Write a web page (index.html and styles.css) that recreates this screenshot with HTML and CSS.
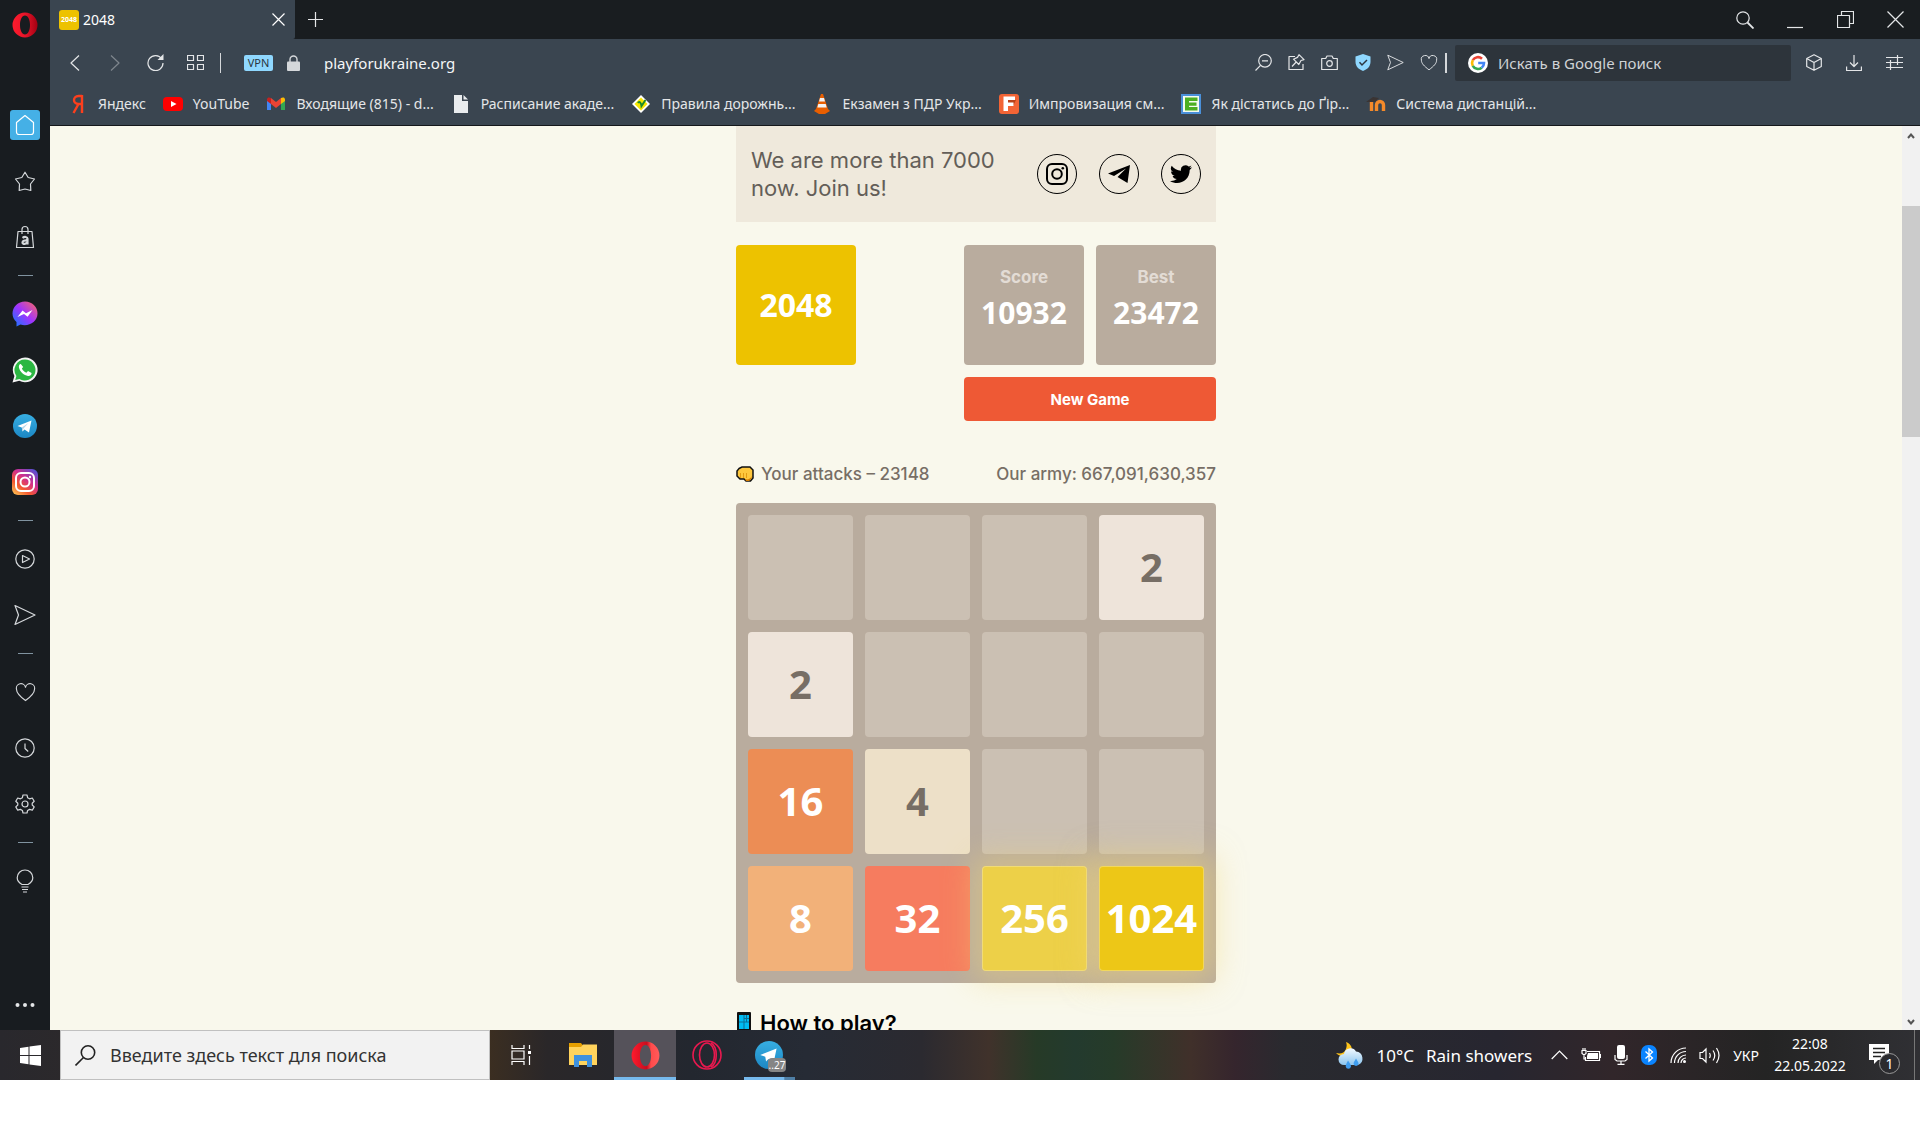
FILE: index.html
```html
<!DOCTYPE html>
<html lang="uk">
<head>
<meta charset="utf-8">
<title>2048</title>
<link rel="stylesheet" href="styles.css">
</head>
<body>
<svg class="defs" width="0" height="0" aria-hidden="true">
  <defs>
    <linearGradient id="g-opera" x1="0" x2="1"><stop offset="0" stop-color="#ff1b2d"/><stop offset="0.5" stop-color="#e8152a"/><stop offset="1" stop-color="#a30012"/></linearGradient>
    <linearGradient id="g-opera2" x1="0" x2="1"><stop offset="0" stop-color="#ff1b2d"/><stop offset="0.55" stop-color="#c80d1e"/><stop offset="0.7" stop-color="#ff4b4b"/><stop offset="1" stop-color="#ff5b5b"/></linearGradient>
    <linearGradient id="g-msg" x1="0" y1="1" x2="1" y2="0"><stop offset="0" stop-color="#0a7cff"/><stop offset="0.5" stop-color="#a033ff"/><stop offset="1" stop-color="#ff6a5c"/></linearGradient>
    <linearGradient id="g-ig" x1="0" y1="1" x2="0.8" y2="0"><stop offset="0" stop-color="#ffd35a"/><stop offset="0.35" stop-color="#f4582f"/><stop offset="0.65" stop-color="#d02e8f"/><stop offset="1" stop-color="#5b4fd0"/></linearGradient>
    <linearGradient id="g-tg" x1="0" y1="0" x2="0" y2="1"><stop offset="0" stop-color="#37aee2"/><stop offset="1" stop-color="#1c87c4"/></linearGradient>
    <linearGradient id="g-cloud" x1="0" y1="0" x2="0" y2="1"><stop offset="0" stop-color="#f2f9ff"/><stop offset="1" stop-color="#8cc5ef"/></linearGradient>
    <symbol id="i-send" viewBox="0 0 22 22"><path d="M1 1.500 21 11 1 20.500 4.500 11z"/></symbol>
    <symbol id="i-heart" viewBox="0 0 22 20"><path d="M11 18.500C5 14 1.500 10.500 1.500 6.500A4.800 4.800 0 0 1 11 4.500 4.800 4.800 0 0 1 20.500 6.500C20.500 10.500 17 14 11 18.500z"/></symbol>
  </defs>
</svg>
<div class="desktop">
  <div class="browser">
    <aside class="sidebar">
      <div class="brand"><svg width="26" height="26" viewBox="0 0 26 26"><path fill="url(#g-opera)" fill-rule="evenodd" d="M13 .5a12.500 12.500 0 1 0 0 25 12.500 12.500 0 0 0 0-25zM13 3.500c3 0 5 4.200 5 9.500s-2 9.500-5 9.500-5-4.200-5-9.500 2-9.500 5-9.500z"/></svg></div>
      <button class="side home" aria-label="Home"><svg class="ln" width="20" height="22" viewBox="0 0 20 22"><path d="M10 1.500 18.500 8.500V18a2.500 2.500 0 0 1-2.500 2.500H4A2.500 2.500 0 0 1 1.500 18V8.500z"/></svg></button>
      <button class="side" aria-label="Speed dial"><svg class="ln" width="22" height="21" viewBox="0 0 22 21"><path d="M11 1.200 14.200 6.500 20.500 8 16.500 13 16.800 19.500 11 18 5.200 19.500 5.500 13 1.500 8 7.800 6.500z"/></svg></button>
      <button class="side" aria-label="Shopping"><svg class="ln" width="20" height="24" viewBox="0 0 20 24"><path d="M3 6.500h14l1.500 16H1.500zM7 9V4.500a3 3 0 0 1 6 0V9"/><path d="M7.500 12.800c2-1.300 5-1.100 5 1V19.500M12.500 15.500c-3-.2-5 .3-5 1.900 0 2 4 2 5-.4" stroke-width="2.200"/></svg></button>
      <hr class="rule">
      <button class="side" aria-label="Messenger"><svg width="26" height="26" viewBox="0 0 26 26"><path fill="url(#g-msg)" d="M13 .5C6 .5.500 5.500.500 12.500c0 3.500 1.500 6.500 4 8.500V25.500L8.500 23.600c8 2.500 17-2.600 17-11C25.500 5.500 20 .5 13 .5z"/><path fill="#fff" d="M5.500 16 10.500 9.500 14 12.300 20.500 9 15.600 15.800 12 13z"/></svg></button>
      <button class="side" aria-label="WhatsApp"><svg width="26" height="26" viewBox="0 0 26 26"><path fill="#f4f4f4" d="M13 .5A12.400 12.400 0 0 0 2.400 19L.5 25.500 7.300 23.800A12.400 12.400 0 1 0 13 .5z"/><path fill="#2cb742" d="M13 2.500A10.500 10.500 0 0 0 4.400 19l-1.200 4 4.200-1.100A10.500 10.500 0 1 0 13 2.500z"/><path fill="#fff" d="M8.800 7c-1.500 0-2.300 2-1.800 3.800 1 4 5 7.700 9 8.200 2 .2 3.600-1 3.600-3l-3.600-1.900-1.600 1.700c-2-.8-3.600-2.300-4.500-4.300l1.300-1.500z"/></svg></button>
      <button class="side" aria-label="Telegram"><svg width="24" height="24" viewBox="0 0 24 24"><circle cx="12" cy="12" r="12" fill="url(#g-tg)"/><path fill="#fff" d="M4.500 12 18.500 6.500 16 18.500 11.500 15.500 9.500 17.500 8.800 13.500z"/><path fill="#b5d5e8" d="M8.800 13.500 15.500 9 10.500 14.500 9.500 17.500z"/></svg></button>
      <button class="side" aria-label="Instagram"><svg width="26" height="26" viewBox="0 0 26 26"><rect width="26" height="26" rx="6" fill="url(#g-ig)"/><rect x="4" y="4" width="18" height="18" rx="5" fill="none" stroke="#fff" stroke-width="2"/><circle cx="13" cy="13" r="4.500" fill="none" stroke="#fff" stroke-width="2"/><circle cx="18" cy="8" r="1.200" fill="#fff"/></svg></button>
      <hr class="rule">
      <button class="side" aria-label="Player"><svg class="ln" width="20" height="20" viewBox="0 0 20 20"><circle cx="10" cy="10" r="9.200"/><path d="M7.500 6.500 14.500 10 7.500 13.500z"/></svg></button>
      <button class="side" aria-label="My Flow"><svg class="ln" width="22" height="22"><use href="#i-send"/></svg></button>
      <hr class="rule">
      <button class="side" aria-label="Bookmarks"><svg class="ln" width="21" height="19"><use href="#i-heart"/></svg></button>
      <button class="side" aria-label="History"><svg class="ln" width="20" height="20" viewBox="0 0 20 20"><circle cx="10" cy="10" r="9.200"/><path d="M10 5.500v5l3.200 3"/></svg></button>
      <button class="side" aria-label="Settings"><svg class="ln" width="20" height="20" viewBox="0 0 20 20"><circle cx="10" cy="10" r="3"/><path d="M8 1h4l.6 2.700 2 1.100 2.700-.8 1.900 3.300-2 1.900v1.800l2 1.900-1.900 3.300-2.700-.8-2 1.100L12 19H8l-.6-2.500-2-1.100-2.700.8-1.900-3.300 2-1.900V9.200l-2-1.900 1.900-3.300 2.700.8 2-1.100z"/></svg></button>
      <hr class="rule">
      <button class="side" aria-label="Tips"><svg class="ln" width="18" height="24" viewBox="0 0 18 24"><path d="M6 15.500C3 13.800 1.200 11.800 1.200 8.800a7.800 7.800 0 0 1 15.600 0c0 3-1.800 5-4.800 6.700zM5.500 18h7M6 20.500h6M7 23h4"/></svg></button>
      <button class="side more" aria-label="More"><svg width="20" height="4" viewBox="0 0 20 4" fill="#e4e6e8"><circle cx="2.500" cy="2" r="2"/><circle cx="10" cy="2" r="2"/><circle cx="17.500" cy="2" r="2"/></svg></button>
    </aside>

    <div class="window">
      <header class="tabs">
        <div class="tab"><span class="favicon">2048</span><span class="tab-title">2048</span>
          <button class="ico tab-close" aria-label="Close tab"><svg class="ln" width="13" height="13" viewBox="0 0 13 13"><path d="M.5.5l12 12M12.500.5l-12 12"/></svg></button></div>
        <button class="ico plus" aria-label="New tab"><svg class="ln" width="15" height="15" viewBox="0 0 15 15"><path d="M7.500 0v15M0 7.500h15"/></svg></button>
        <div class="winctl">
          <button class="ico" aria-label="Search tabs"><svg class="ln" width="18" height="18" viewBox="0 0 18 18"><circle cx="7" cy="7" r="6.200"/><path d="M11.500 11.500 17.500 17.500" stroke-width="1.800"/></svg></button>
          <button class="ico" aria-label="Minimize"><svg class="ln" width="16" height="18" viewBox="0 0 16 18"><path d="M0 16.500h16"/></svg></button>
          <button class="ico" aria-label="Restore"><svg class="ln" width="17" height="17" viewBox="0 0 17 17"><path d="M.5 4.500h12v12H.500zM4.500 4.500v-4h12v12h-4"/></svg></button>
          <button class="ico" aria-label="Close"><svg class="ln" width="17" height="17" viewBox="0 0 17 17"><path d="M.5.500l16 16M16.500.500l-16 16"/></svg></button>
        </div>
      </header>

      <div class="toolbar">
        <button class="ico nav" aria-label="Back"><svg class="ln" width="10" height="16" viewBox="0 0 10 16"><path d="M9 .5 1 8l8 7.500"/></svg></button>
        <button class="ico nav dim" aria-label="Forward"><svg class="ln" width="10" height="16" viewBox="0 0 10 16"><path d="M1 .5 9 8l-8 7.500"/></svg></button>
        <button class="ico nav" aria-label="Reload"><svg class="ln" width="17" height="17" viewBox="0 0 17 17"><path d="M14.800 5A7.500 7.500 0 1 0 16 9"/><path d="M16.500 0v6h-6z" fill="currentColor" stroke="none"/></svg></button>
        <button class="ico nav" aria-label="Speed dial"><svg class="ln" width="17" height="15" viewBox="0 0 17 15"><path d="M.5.500h6v5h-6zM10.500.500h6v5h-6zM.5 9.500h6v5h-6zM10.500 9.500h6v5h-6z"/></svg></button>
        <span class="bar"></span>
        <button class="vpn">VPN</button>
        <svg class="lock" width="13" height="16" viewBox="0 0 13 16"><path d="M3 7V4.500a3.500 3.500 0 0 1 7 0V7" fill="none" stroke="#d5d8db" stroke-width="1.400"/><rect y="6.500" width="13" height="9.500" rx="1" fill="#d5d8db"/></svg>
        <input class="url" aria-label="Address" value="playforukraine.org">
        <button class="ico act" aria-label="Zoom"><svg class="ln" width="17" height="17" viewBox="0 0 17 17"><circle cx="10" cy="6.800" r="6.300"/><path d="M5.500 11.300.5 16.500M7 6.800h6"/></svg></button>
        <button class="ico act" aria-label="Pinboard"><svg class="ln" width="17" height="17" viewBox="0 0 17 17"><path d="M7 2.500H1v13h14V10M11 .7l5 5-3 .8-2.200 4L5.500 5.200l4-1.800zM8.200 8 4 12.500"/></svg></button>
        <button class="ico act" aria-label="Snapshot"><svg class="ln" width="17" height="15" viewBox="0 0 17 15"><path d="M.7 3.500h4L6 1h5l1.300 2.500h4v11H.7z"/><circle cx="8.500" cy="8.500" r="2.800"/></svg></button>
        <button class="ico act" aria-label="Ad blocker"><svg width="16" height="17" viewBox="0 0 16 17"><path fill="#8fd8ff" d="M8 0l7.500 2.500V8c0 4.500-3.500 7.500-7.500 9C4 15.500.5 12.500.5 8V2.500z"/><path d="M4.500 8.300 7 11l5-5" fill="none" stroke="#2b3640" stroke-width="1.500"/></svg></button>
        <button class="ico act" aria-label="Send"><svg class="ln" width="17" height="17"><use href="#i-send"/></svg></button>
        <button class="ico act" aria-label="Bookmark"><svg class="ln" width="18" height="16"><use href="#i-heart"/></svg></button>
        <span class="bar bold"></span>
        <label class="search"><svg width="20" height="20" viewBox="0 0 20 20"><circle cx="10" cy="10" r="10" fill="#fff"/><g fill="none" stroke-width="2.600"><path stroke="#ea4335" d="M4.800 7.200a6 6 0 0 1 9.200-1.500"/><path stroke="#fbbc05" d="M4.800 7.200a6 6 0 0 0 0 5.600"/><path stroke="#34a853" d="M4.800 12.800a6 6 0 0 0 8.900 1.900"/><path stroke="#4285f4" d="M13.700 14.700A6 6 0 0 0 16 10h-5.800"/></g></svg><input aria-label="Search" placeholder="Искать в Google поиск"></label>
        <button class="ico nav" aria-label="Crypto wallet"><svg class="ln" width="16" height="17" viewBox="0 0 16 17"><path d="M8 .7 15.300 4.500v8L8 16.300.7 12.500v-8zM.7 4.500 8 8.500l7.300-4M8 8.500v7.800"/></svg></button>
        <button class="ico nav" aria-label="Downloads"><svg class="ln" width="16" height="16" viewBox="0 0 16 16"><path d="M8 0v11M4 7.500 8 11.500 12 7.500M.6 11.500v4h14.800v-4"/></svg></button>
        <button class="ico nav" aria-label="Easy setup"><svg class="ln" width="17" height="15" viewBox="0 0 17 15"><path d="M0 2.500h17M0 7.500h17M0 12.500h17M11.500 0v5M4.500 5v5M11.500 5v5M4.500 10v5"/></svg></button>
      </div>

      <nav class="bookmarks">
        <a href="#"><svg viewBox="0 0 20 20"><path d="M14 1v18M14 2h-3.500c-6 0-6 8 0 8H14M10.500 10 5.500 19" fill="none" stroke="#fc3f1d" stroke-width="2.400"/></svg>Яндекс</a>
        <a href="#"><svg viewBox="0 0 20 20"><rect y="3" width="20" height="14" rx="4" fill="#f00"/><path d="M8 7l5.500 3L8 13z" fill="#fff"/></svg>YouTube</a>
        <a href="#"><svg viewBox="0 0 20 20"><path fill="#4285f4" d="M1 5v11h4V8z"/><path fill="#34a853" d="M19 5v11h-4V8z"/><path fill="#c5221f" d="M1 5.500C1 3 3.500 3 5 4v6L1 7z"/><path fill="#fbbc04" d="M19 5.500C19 3 16.500 3 15 4v6l4-3z"/><path fill="#ea4335" d="M5 4l5 4 5-4v6l-5 4-5-4z"/></svg>Входящие (815) - d...</a>
        <a href="#"><svg viewBox="0 0 20 20"><path fill="#e9ecee" d="M3 1h8v6h6v12H3z"/><path fill="#e9ecee" d="M12.500 1 17 5.500h-4.500z"/></svg>Расписание акаде...</a>
        <a href="#"><svg viewBox="0 0 20 20"><path fill="#fff" d="M10 1l9 9-9 9-9-9z"/><path fill="#f7e600" d="M10 3.500l6.500 6.500-6.500 6.500L3.500 10z"/><path fill="none" stroke="#1c8a2a" stroke-width="2" d="M7 9c1-2 3-1 3.500 3l4-6"/></svg>Правила дорожнь...</a>
        <a href="#"><svg viewBox="0 0 20 20"><path fill="#e85e00" d="M9 0h2l5 15 2 2-5 3H7l-5-3 2-2z"/><path fill="#f3f3f3" d="M8 4h4l1 3.500H7zM6.300 10h7.400l1 3.500H5.300z"/></svg>Екзамен з ПДР Укр...</a>
        <a href="#"><svg viewBox="0 0 20 20"><rect width="20" height="20" rx="3" fill="#f26435"/><path fill="#b8421a" d="M5 3v14h4v-5h5l3-6z"/><path fill="#fff" d="M4.500 2.500h11.500v3.500H9v2.500h5.500V12H9v5H4.500z"/></svg>Импровизация см...</a>
        <a href="#"><svg viewBox="0 0 20 20"><rect width="20" height="20" fill="#4a90d9"/><rect x="2" y="2" width="16" height="16" fill="#f4fbf0"/><path fill="#4caf22" d="M4 3.500h12.500V7H8v1.500h7.500v3.200H8V13h8.500v3.500H4z"/></svg>Як дістатись до Ґір...</a>
        <a href="#"><svg viewBox="0 0 20 20"><path fill="none" stroke="#f58a2a" stroke-width="3.400" d="M5.500 8v9M10.500 17v-6a3.400 3.400 0 0 1 7 0v6"/><path fill="#3a3433" d="M0 8 7 3l6 1-4 4z"/></svg>Система дистанцій...</a>
      </nav>

      <div class="view">
        <main class="game">
          <section class="banner">
            <p>We are more than 7000 now. Join us!</p>
            <a href="#" aria-label="Instagram"><svg width="22" height="22" viewBox="0 0 22 22"><rect x="1" y="1" width="20" height="20" rx="5" fill="none" stroke="#000" stroke-width="2"/><circle cx="11" cy="11" r="4.800" fill="none" stroke="#000" stroke-width="2"/><circle cx="16.800" cy="5.200" r="1.300"/></svg></a>
            <a href="#" aria-label="Telegram"><svg width="22" height="18" viewBox="0 0 22 18"><path d="M22 0 0 8.500 6 11 18 3.500 9.500 12 19.500 18z"/></svg></a>
            <a href="#" aria-label="Twitter"><svg width="22" height="18" viewBox="0 0 22 18"><path d="M22 2.200c-.8.400-1.600.6-2.500.7.900-.6 1.600-1.400 1.900-2.400-.8.500-1.800.9-2.800 1.100A4.500 4.500 0 0 0 11 5.700C7.200 5.500 4 3.700 1.700.8 0 3.600 1 5.800 3 6.900c-.7 0-1.400-.2-2-.6 0 2.300 1.500 4 3.600 4.500-.7.200-1.400.2-2 .1.500 1.800 2.200 3.100 4.200 3.100A9 9 0 0 1 0 15.900C8.500 21 19.700 16 19.700 5c.9-.7 1.700-1.700 2.300-2.800z"/></svg></a>
          </section>
          <section class="top">
            <h1 class="logo">2048</h1>
            <div class="stat"><span>Score</span><strong>10932</strong></div>
            <div class="stat"><span>Best</span><strong>23472</strong></div>
            <button class="new">New Game</button>
          </section>
          <div class="info">
            <span><svg width="18" height="16" viewBox="0 0 18 16"><path d="M3 2.500 6 1h8l3 3v8l-2.500 3H10l-2-2H4L1 10V5z" fill="#ffc83d" stroke="#111" stroke-width="1.500"/><path d="M4.500 7v5M7.500 7v5M10.500 7v5" stroke="#e39b12" fill="none"/><path d="M9 13c3 1 5 0 7-3l-1 3-2 2h-3z" fill="#d67d00"/></svg>Your attacks – 23148</span>
            <span>Our army: 667,091,630,357</span>
          </div>
          <section class="board">
            <div class="cell"></div><div class="cell"></div><div class="cell"></div><div class="cell t2">2</div>
            <div class="cell t2">2</div><div class="cell"></div><div class="cell"></div><div class="cell"></div>
            <div class="cell t16">16</div><div class="cell t4">4</div><div class="cell"></div><div class="cell"></div>
            <div class="cell t8">8</div><div class="cell t32">32</div><div class="cell t256">256</div><div class="cell t1024">1024</div>
          </section>
          <h2 class="how"><svg width="16" height="22" viewBox="0 0 16 22"><rect x="1" y="0" width="14" height="22" rx="1" fill="#111"/><rect x="3" y="3" width="10" height="14" fill="#00bcf2"/><path d="M8 3v14M3 10h10M10.500 3v7M8 6.500h5" stroke="#0a6f96" fill="none"/></svg>How to play?</h2>
        </main>
        <div class="scroll" aria-hidden="true">
          <svg width="8" height="6" viewBox="0 0 8 6"><path d="M1 5l3-3.500L7 5" fill="none" stroke="#555" stroke-width="2"/></svg>
          <div class="track"><div class="thumb"></div></div>
          <svg width="8" height="6" viewBox="0 0 8 6"><path d="M1 1l3 3.500L7 1" fill="none" stroke="#555" stroke-width="2"/></svg>
        </div>
      </div>
    </div>
  </div>

  <footer class="taskbar">
    <button class="start" aria-label="Start"><svg width="21" height="21" viewBox="0 0 21 21" fill="#fff"><path d="M0 3 8.500 1.800V10H0zM9.500 1.600 21 0v10H9.500zM0 11h8.500v8.200L0 18zM9.500 11H21v10L9.500 19.400z"/></svg></button>
    <label class="find"><svg width="21" height="21" viewBox="0 0 21 21" fill="none" stroke="#222" stroke-width="1.600"><circle cx="13" cy="7.500" r="6.700"/><path d="M8.500 12.500.5 20.500"/></svg><input aria-label="Search Windows" placeholder="Введите здесь текст для поиска"></label>
    <button class="app" aria-label="Task view"><svg width="21" height="20" viewBox="0 0 21 20" fill="none" stroke="#fff" stroke-width="1.200"><path d="M1 0v3.500h12V0M1 6h12v8H1zM1 20v-3.500h12V20M18.500 0v4M18.500 11v9"/><path d="M17 6h3v3h-3z" fill="#fff" stroke="none"/></svg></button>
    <button class="app" aria-label="Explorer"><svg width="28" height="24" viewBox="0 0 28 24"><path fill="#e59f00" d="M0 0h12l2 2.500L12 5H0z"/><path fill="#ffd35c" d="M0 4h12l2-2.500h14V22H0z"/><path fill="#3f91dd" d="M5 12h18v12h-5v-6h-8v6H5z"/></svg></button>
    <button class="app active" aria-label="Opera"><svg width="29" height="29" viewBox="0 0 26 26"><path fill="url(#g-opera2)" fill-rule="evenodd" d="M13 .5a12.500 12.500 0 1 0 0 25 12.500 12.500 0 0 0 0-25zM13 3.500c3 0 5 4.200 5 9.500s-2 9.500-5 9.500-5-4.200-5-9.500 2-9.500 5-9.500z"/></svg></button>
    <button class="app" aria-label="Opera GX"><svg width="30" height="30" viewBox="0 0 30 30" fill="none" stroke="#e8194f" stroke-width="1.600"><circle cx="15" cy="15" r="14"/><ellipse cx="15" cy="15" rx="7.500" ry="12"/><path d="M19 3c7 4 7 20 0 24"/></svg></button>
    <button class="app running" aria-label="Telegram"><svg width="28" height="28" viewBox="0 0 24 24"><circle cx="12" cy="12" r="12" fill="url(#g-tg)"/><path fill="#fff" d="M4.500 12 18.500 6.500 16 18.500 11.500 15.500 9.500 17.500 8.800 13.500z"/></svg><span class="badge">..27</span></button>
    <div class="tray">
      <button class="weather"><svg width="29" height="27" viewBox="0 0 29 27"><path fill="#ffc41a" d="M10 0c5 2 7 6 5 10-3 5-10 6-15 1 5 1 8 0 9.500-3C11 5 11 2.500 10 0z"/><path fill="url(#g-cloud)" d="M8 23a5.500 5.500 0 0 1 0-11 6.500 6.500 0 0 1 12-2.500 7 7 0 0 1 2 13.500z"/><path fill="#3f9df0" d="M12 18.500c2 3 3 4.500 3 6a2.700 2.700 0 0 1-5.300 0c0-1.500.8-3 2.300-6zM20 16.500c1.500 3 2.500 3.500 2.500 5a2.400 2.400 0 0 1-4.900 0c0-1.500 1.400-3 2.400-5z"/></svg><span>10°C</span><span>Rain showers</span></button>
      <button aria-label="Hidden icons"><svg width="17" height="10" viewBox="0 0 17 10"><path d="M.7 9 8.500 1l7.800 8" class="w"/></svg></button>
      <button aria-label="Battery"><svg width="20" height="14" viewBox="0 0 20 14"><path d="M6 3.500h12.500v9h-14V9M1 2.500h4v3L3 7 1 5.500zM3 7v4h2M2 0v2M4 0v2" class="w"/><path d="M7 5h10v6H6V8z" fill="#fff"/><path d="M19 6h1v4h-1z" fill="#fff"/></svg></button>
      <button aria-label="Microphone"><svg width="14" height="20" viewBox="0 0 14 20"><rect x="3" width="8" height="14" rx="2" fill="#fff"/><path d="M1 10v4.500l2 1.500h8l2-1.500V10M7 16v3M3.500 19.300h7" class="w"/></svg></button>
      <button aria-label="Bluetooth"><svg width="16" height="20" viewBox="0 0 16 20"><rect width="16" height="20" rx="7" fill="#0a84ff"/><path d="M4.500 6.500 11.500 13 8 16V4l3.500 3L4.500 13.500" fill="none" stroke="#fff" stroke-width="1.300"/></svg></button>
      <button aria-label="Network"><svg width="16" height="16" viewBox="0 0 16 16"><path d="M1 16A15 15 0 0 1 16 1M4.500 16A11.500 11.500 0 0 1 16 4.500M8 16a8 8 0 0 1 8-8M11 16a5 5 0 0 1 5-5" class="w"/><circle cx="14.500" cy="14.500" r="1.500" fill="#fff"/></svg></button>
      <button aria-label="Volume"><svg width="21" height="17" viewBox="0 0 21 17"><path d="M1 5.500h2.500L7 2v13l-3.500-3.500H1zM10.500 6q1.500 2.500 0 5M14 3.500q3.500 5 0 10M17.500 1q5 7.500 0 15" class="w"/></svg></button>
      <button class="lang">УКР</button>
      <button class="clock"><time>22:08</time><time>22.05.2022</time></button>
      <button class="notes" aria-label="Notifications"><svg width="20" height="20" viewBox="0 0 20 20"><path fill="#fff" d="M0 0h20v16H9l-4 4v-4H0z"/><path d="M4 4.500h12M4 8.500h12M4 12.500h8" stroke="#222" stroke-width="1.300"/></svg><span class="count">1</span></button>
    </div>
  </footer>
</div>
</body>
</html>
```
FILE: styles.css
```css
* { box-sizing: border-box; }
body { margin: 0; background: #fff; font-family: "Noto Sans", "Open Sans", sans-serif; }
button { border: 0; padding: 0; background: none; font: inherit; color: inherit; }
input { border: 0; padding: 0; background: none; font: inherit; color: inherit; outline: 0; min-width: 0; }
a { color: inherit; text-decoration: none; }
.defs { position: absolute; }
svg { display: block; flex: none; }
.ln { fill: none; stroke: currentColor; stroke-width: 1.2; stroke-linejoin: round; }

.desktop { height: 100vh; padding-bottom: 52px; display: flex; flex-direction: column; }
.browser { flex: 1; min-height: 0; display: flex; background: #181c20; color: #e4e6e8; }

/* Sidebar */
.sidebar { width: 50px; display: flex; flex-direction: column; align-items: center; color: #d5d8db; }
.brand { height: 97px; padding-top: 12px; }
.side { width: 50px; height: 56px; display: grid; place-items: center; }
.home svg { box-sizing: content-box; padding: 4px 5px; border-radius: 3px; background: #45b0e6; color: #fff; }
.rule { width: 15px; height: 1px; margin: 10px 0; border: 0; background: #8093a0; }
.more { margin-top: auto; height: 50px; }

/* Browser chrome */
.window { flex: 1; min-width: 0; display: flex; flex-direction: column; background: #3a4550; }
.ico { display: grid; place-items: center; }
.tabs { height: 39px; display: flex; align-items: stretch; background: #191d20; }
.tab { width: 245px; padding: 0 2px 0 9px; display: flex; align-items: center; background: #3a4550; border-radius: 0 0 2px 0; font-size: 14px; color: #fff; }
.favicon { width: 20px; height: 20px; margin-right: 4px; border-radius: 3px; background: #edc200; font-size: 7px; font-weight: 700; line-height: 20px; text-align: center; }
.tab-title { flex: 1; }
.tab-close { width: 30px; height: 39px; }
.plus { width: 40px; }
.winctl { margin-left: auto; display: flex; }
.winctl .ico { width: 50px; }

.toolbar { height: 47px; padding: 0 6px 0 5px; display: flex; align-items: center; }
.nav { width: 40px; height: 40px; }
.dim { opacity: .4; }
.bar { width: 1px; height: 20px; margin: 0 23px 0 5px; background: #d5d8db; }
.bar.bold { width: 2px; margin: 0 8px 0 0; }
.vpn { width: 29px; height: 16px; border-radius: 2px; background: #8fd8ff; color: #2b3640; font-size: 11px; line-height: 16px; }
.lock { margin: 0 24px 0 14px; }
.url { flex: 1; font-size: 15px; color: #f4f5f6; }
.act { width: 33px; height: 40px; }
.search { width: 336px; height: 36px; margin-right: 3px; padding-left: 13px; display: flex; align-items: center; gap: 10px; border-radius: 2px; background: #2d343b; font-size: 15px; }
.search input { flex: 1; }
.search input::placeholder { color: #d0d3d6; opacity: 1; }

.bookmarks { height: 40px; padding: 0 0 4px 18px; display: flex; align-items: center; gap: 17px; border-bottom: 1px solid #15181b; font-size: 14px; white-space: nowrap; }
.bookmarks a { display: flex; align-items: center; gap: 10px; }
.bookmarks svg { width: 20px; height: 20px; }

/* Page */
.view { flex: 1; min-height: 0; display: flex; overflow: hidden; background: #f9f8ec; color: #776e65; font-family: "Inter", "Noto Sans", sans-serif; }
.game { flex: 1; display: flex; flex-direction: column; align-items: center; }
.game > * { width: 480px; flex: none; }
.banner { height: 96px; margin-bottom: 23px; padding: 0 15px; display: flex; align-items: center; gap: 22px; background: #efe9dc; }
.banner p { flex: 1; margin: 0; font-size: 22px; line-height: 28px; color: #635e58; }
.banner a { width: 40px; height: 40px; border: 1px solid #000; border-radius: 50%; display: grid; place-items: center; }
.top { display: grid; grid-template-columns: 1fr 120px 120px; gap: 12px; }
.logo, .stat { width: 120px; height: 120px; margin: 0; border-radius: 4px; color: #fff; font-weight: 700; }
.logo, .stat strong, .cell { font-family: "Noto Sans", sans-serif; }
.logo { background: #edc200; font-size: 32px; line-height: 120px; text-align: center; }
.stat { padding-top: 20px; background: #b9ac9e; text-align: center; }
.stat span, .stat strong { display: block; }
.stat span { font-size: 17px; line-height: 24px; color: #e3dcd5; }
.stat strong { font-size: 30px; font-weight: 700; line-height: 48px; }
.new { grid-column: 2 / 4; height: 44px; border-radius: 4px; background: #ee5935; color: #fff; font-size: 15px; font-weight: 700; }
.info { margin-top: 40px; height: 42px; padding-top: 1px; display: flex; align-items: flex-start; justify-content: space-between; font-size: 17px; font-weight: 500; line-height: 24px; }
.info span { display: flex; align-items: center; gap: 7px; }
.board { padding: 12px; display: grid; grid-template-columns: repeat(4, 1fr); gap: 12px; border-radius: 4px; background: #b9ac9e; }
.cell { height: 105px; border-radius: 4px; background: #cbc0b3; color: #fff; font-size: 40px; font-weight: 700; line-height: 103px; text-align: center; }
.t2 { background: #eee4da; color: #776e65; }
.t4 { background: #ede0c8; color: #776e65; }
.t8 { background: #f2b179; }
.t16 { background: #ec8d55; }
.t32 { background: #f67c5f; }
.t256 { background: #edd048; box-shadow: 0 0 30px 10px rgba(243, 215, 116, .4), inset 0 0 0 1px rgba(255, 255, 255, .25); }
.t1024 { background: #edc717; box-shadow: 0 0 30px 10px rgba(243, 215, 116, .5), inset 0 0 0 1px rgba(255, 255, 255, .3); }
.how { margin: 26px 0 0; display: flex; align-items: center; gap: 8px; color: #000; font-size: 22px; font-weight: 600; line-height: 28px; }

.scroll { width: 18px; padding: 7px 0 5px; display: flex; flex-direction: column; align-items: center; background: #f1f1f1; }
.track { flex: 1; width: 100%; padding-top: 67px; }
.thumb { height: 231px; background: #cbcbcb; }

/* Taskbar */
.taskbar { height: 50px; flex: none; display: flex; align-items: stretch; color: #fff; background: linear-gradient(90deg, #29282d 0%, #3b2e21 25.500%, #2a2729 28.500%, #23272f 36%, #262b35 42%, #2b2a30 48%, #40322b 51.500%, #263a27 54%, #233a2e 56%, #263b29 58%, #40302a 62%, #35252d 64.300%, #292a2f 67%, #272630 78%, #31262a 84%, #242424 92%, #303034 100%); }
.start { width: 60px; display: grid; place-items: center; }
.find { width: 430px; padding-left: 14px; display: flex; align-items: center; gap: 14px; border: 1px solid #c0c0c0; background: #f2f2f2; color: #333; font-size: 18px; }
.find input { flex: 1; }
.find input::placeholder { color: #333; opacity: 1; }
.app { width: 62px; display: grid; place-items: center; position: relative; }
.active { background: #55525a; box-shadow: inset 0 -3px #76b9ed; }
.running::after { content: ""; position: absolute; left: 6px; right: 5px; bottom: 0; height: 3px; background: linear-gradient(90deg, #76b9ed 78%, #4f7fa6 80%); }
.badge { position: absolute; right: 14px; bottom: 8px; width: 18px; height: 14px; border-radius: 4px; background: #858585; font-size: 10px; line-height: 14px; text-align: center; }
.tray { margin-left: auto; padding-right: 5px; display: flex; align-items: center; gap: 13px; font-size: 16px; }
.tray .w { fill: none; stroke: #fff; stroke-width: 1.2; }
.weather { margin-right: 6px; display: flex; align-items: center; gap: 12px; font-size: 17px; }
.lang { font-size: 14px; }
.clock { width: 76px; font-size: 14px; line-height: 22px; }
.clock time { display: block; }
.notes { height: 50px; width: 54px; padding: 14px 0 0 8px; display: flex; align-items: flex-start; position: relative; border-right: 1px solid #777; }
.count { position: absolute; left: 18px; top: 23px; width: 21px; height: 21px; border: 1px solid #999; border-radius: 50%; background: #2b2b2f; font-size: 14px; line-height: 19px; text-align: center; }
```
